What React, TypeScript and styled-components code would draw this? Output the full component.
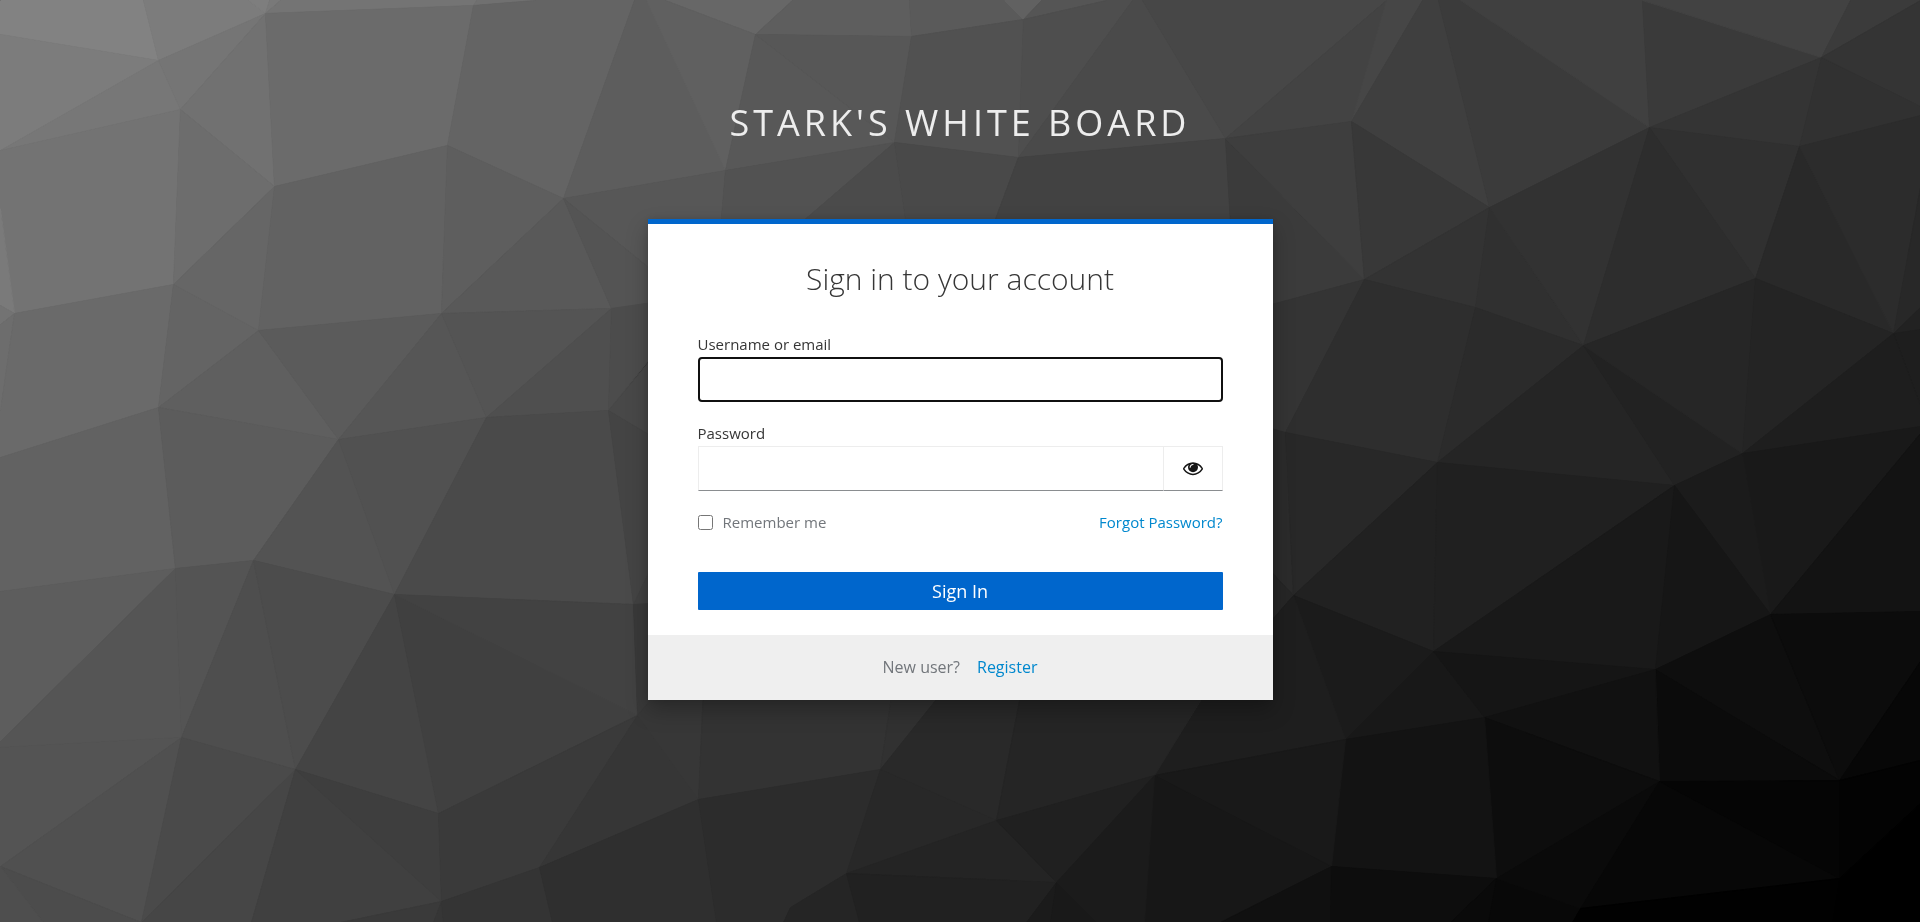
import React, { useState } from 'react';
import styled, { createGlobalStyle, css } from 'styled-components';

const GlobalStyle = createGlobalStyle`
  *, *::before, *::after { box-sizing: border-box; }
  body {
    margin: 0;
    background: #333;
    color: #363636;
    font-family: 'Open Sans', 'Noto Sans', sans-serif;
    font-size: 16px;
  }
`;

/* Low-poly backdrop: [grey level, outline] for every facet. */
const facets: Array<[string, string]> = [
  ['82', '0,0 143,0 158,60 0,34'],
  ['7c', '143,0 248,0 265,13 158,60'],
  ['7e', '248,0 269,0 265,13'],
  ['79', '269,0 280,0 265,13'],
  ['74', '280,0 476,0 473,5 265,13'],
  ['7c', '0,34 158,60 0,150'],
  ['77', '0,150 158,60 180,109'],
  ['75', '158,60 265,13 180,109'],
  ['71', '180,109 265,13 274,186'],
  ['6b', '265,13 473,5 447,145 274,186'],
  ['70', '476,0 535,0 473,5'],
  ['64', '473,5 535,0 634,0 563,198 447,145'],
  ['5d', '634,0 646,0 725,170 563,198'],
  ['73', '0,150 180,109 173,284 14,313 0,208'],
  ['7a', '0,208 14,313 0,305'],
  ['73', '0,305 14,313 0,324'],
  ['6d', '0,324 14,313 0,410'],
  ['6d', '180,109 274,186 173,284'],
  ['66', '274,186 258,330 173,284'],
  ['62', '274,186 447,145 441,313 258,330'],
  ['5e', '447,145 563,198 441,313'],
  ['59', '563,198 611,308 441,313'],
  ['6a', '14,313 173,284 158,407 0,457 0,410'],
  ['64', '173,284 258,330 158,407'],
  ['5f', '258,330 338,439 158,407'],
  ['5b', '258,330 441,313 338,439'],
  ['56', '441,313 486,417 338,439'],
  ['54', '441,313 611,308 486,417'],
  ['4f', '611,308 608,410 486,417'],
  ['62', '0,457 158,407 175,568 0,591'],
  ['5c', '158,407 338,439 253,560 175,568'],
  ['53', '338,439 394,594 253,560'],
  ['51', '338,439 486,417 394,594'],
  ['4a', '486,417 608,410 633,604 394,594'],
  ['5d', '0,591 175,568 0,741'],
  ['55', '175,568 181,737 0,747 0,741'],
  ['54', '175,568 253,560 181,737'],
  ['4e', '253,560 295,769 181,737'],
  ['4c', '253,560 394,594 295,769'],
  ['44', '394,594 438,813 295,769'],
  ['40', '394,594 637,715 438,813'],
  ['42', '394,594 633,604 637,715'],
  ['54', '0,747 181,737 0,866'],
  ['50', '0,866 181,737 141,922'],
  ['4c', '0,866 141,922 43,922'],
  ['4e', '0,866 43,922 0,922'],
  ['4a', '181,737 295,769 141,922'],
  ['46', '295,769 251,922 141,922'],
  ['40', '295,769 441,901 340,922 251,922'],
  ['3e', '295,769 438,813 441,901'],
  ['3a', '438,813 637,715 539,867 441,901'],
  ['36', '637,715 698,799 539,867'],
  ['3a', '441,901 340,922 433,922'],
  ['36', '441,901 433,922 443,922'],
  ['34', '441,901 539,867 552,922 443,922'],
  ['2f', '539,867 698,799 716,922 552,922'],
  ['57', '563,198 725,170 719,240 700,309'],
  ['54', '563,198 700,309 700,300 611,308'],
  ['4c', '611,308 700,295 608,410'],
  ['48', '608,410 700,300 700,465'],
  ['44', '608,410 700,465 633,604'],
  ['41', '633,604 700,465 700,620'],
  ['39', '637,715 633,604 700,600 700,640'],
  ['37', '637,715 700,640 703,690 698,799'],
  ['67', '665,0 792,0 755,34'],
  ['60', '646,0 665,0 755,34 725,170'],
  ['5e', '792,0 909,0 911,36 755,34'],
  ['58', '755,34 894,142 725,170'],
  ['57', '755,34 911,36 894,142'],
  ['5a', '909,0 1004,0 1023,19 911,36'],
  ['61', '1004,0 1041,0 1023,19'],
  ['55', '1041,0 1106,0 1023,19'],
  ['51', '911,36 1023,19 1018,157 894,142'],
  ['4e', '1023,19 1106,0 1132,0 1018,157'],
  ['4a', '1132,0 1142,0 1225,138 1018,157'],
  ['47', '1142,0 1386,0 1225,138'],
  ['52', '725,170 894,142 780,240 719,240'],
  ['4b', '894,142 908,240 780,240'],
  ['49', '894,142 1018,157 987,240 908,240'],
  ['42', '1018,157 1225,138 1231,240 987,240'],
  ['3b', '1225,138 1364,279 1260,307 1231,240'],
  ['43', '1386,0 1351,121 1225,138'],
  ['46', '1386,0 1422,0 1351,121'],
  ['3e', '1225,138 1351,121 1364,279'],
  ['3f', '1422,0 1438,0 1489,207 1351,121'],
  ['3b', '1438,0 1460,0 1649,127 1489,207'],
  ['40', '1460,0 1642,0 1649,127'],
  ['3a', '1642,0 1821,57 1649,127'],
  ['42', '1642,0 1850,0 1821,57'],
  ['3b', '1850,0 1920,0 1821,57'],
  ['34', '1821,57 1920,0 1920,106'],
  ['38', '1351,121 1489,207 1364,279'],
  ['33', '1489,207 1475,307 1364,279'],
  ['30', '1489,207 1583,345 1475,307'],
  ['32', '1489,207 1649,127 1583,345'],
  ['34', '1649,127 1821,57 1799,146'],
  ['31', '1821,57 1920,106 1920,115 1799,146'],
  ['30', '1649,127 1799,146 1755,278'],
  ['2d', '1649,127 1755,278 1583,345'],
  ['29', '1799,146 1893,333 1755,278'],
  ['2c', '1799,146 1920,115 1920,187 1893,333'],
  ['28', '1893,333 1920,187 1920,307'],
  ['22', '1893,333 1920,307 1920,329'],
  ['1e', '1893,333 1920,329 1920,405'],
  ['34', '1260,307 1364,279 1285,432 1260,440'],
  ['2e', '1364,279 1475,307 1437,462 1285,432'],
  ['2b', '1475,307 1583,345 1437,462'],
  ['25', '1583,345 1674,485 1437,462'],
  ['22', '1583,345 1742,453 1674,485'],
  ['26', '1583,345 1755,278 1742,453'],
  ['24', '1755,278 1893,333 1742,453'],
  ['1e', '1893,333 1920,405 1920,426 1742,453'],
  ['19', '1742,453 1920,426 1920,433 1770,614'],
  ['13', '1920,433 1920,611 1770,614'],
  ['1b', '1742,453 1770,614 1674,485'],
  ['2b', '1260,425 1285,432 1293,595 1260,560'],
  ['28', '1285,432 1437,462 1293,595'],
  ['26', '1260,560 1293,595 1201,700'],
  ['21', '1437,462 1433,651 1293,595'],
  ['20', '1437,462 1674,485 1433,651'],
  ['19', '1674,485 1655,669 1433,651'],
  ['16', '1674,485 1770,614 1655,669'],
  ['1b', '1293,595 1433,651 1345,739'],
  ['1e', '1293,595 1345,739 1154,775 1201,700'],
  ['18', '1433,651 1484,717 1345,739'],
  ['15', '1433,651 1655,669 1484,717'],
  ['0e', '1655,669 1770,614 1839,780'],
  ['0c', '1770,614 1920,611 1920,661 1839,780'],
  ['07', '1839,780 1920,661 1920,760'],
  ['0b', '1655,669 1839,780 1659,781'],
  ['11', '1484,717 1655,669 1659,781'],
  ['0d', '1484,717 1659,781 1496,878'],
  ['13', '1345,739 1484,717 1496,878 1331,866'],
  ['19', '1154,775 1345,739 1331,866'],
  ['17', '1154,775 1331,866 1220,922 1144,922'],
  ['10', '1331,866 1330,922 1220,922'],
  ['0d', '1331,866 1496,878 1450,922 1330,922'],
  ['0a', '1496,878 1488,922 1450,922'],
  ['08', '1496,878 1580,908 1572,922 1488,922'],
  ['0a', '1496,878 1659,781 1580,908'],
  ['07', '1659,781 1839,878 1580,908'],
  ['05', '1659,781 1839,780 1839,878'],
  ['03', '1839,780 1920,760 1920,803 1839,878'],
  ['00', '1839,878 1920,803 1920,922 1832,922'],
  ['01', '1580,908 1839,878 1832,922 1572,922'],
  ['33', '698,799 703,690 892,690 880,769'],
  ['31', '880,769 892,690 943,690'],
  ['29', '943,690 1021,690 996,820 880,769'],
  ['25', '1021,690 1206,690 1154,775 996,820'],
  ['2c', '698,799 880,769 846,873 790,907 783,922 716,922'],
  ['28', '880,769 996,820 846,873'],
  ['24', '846,873 996,820 1056,882'],
  ['20', '996,820 1154,775 1056,882'],
  ['1b', '1154,775 1144,922 1096,922 1056,882'],
  ['25', '846,873 859,922 783,922 790,907'],
  ['21', '846,873 1056,882 1026,922 859,922'],
  ['1b', '1056,882 1050,922 1026,922'],
  ['19', '1056,882 1096,922 1050,922'],
];

const Backdrop = styled.svg`
  position: fixed;
  inset: 0;
  z-index: -1;
  width: 100%;
  height: 100%;
`;

const Page = styled.div`
  display: flex;
  flex-direction: column;
  align-items: center;
  min-height: 100vh;
  padding-bottom: 40px;
`;

const Brand = styled.header`
  padding: 100px 16px 74px;
  color: #ededed;
  font-size: 36px;
  line-height: 45px;
  letter-spacing: 4px;
  text-align: center;
  text-transform: uppercase;
`;

const Card = styled.main`
  width: 100%;
  max-width: 625px;
  background: #fff;
  border-top: 5px solid #06c;
  box-shadow: 0 10px 20px rgba(3, 3, 3, 0.25), 0 0 8px rgba(3, 3, 3, 0.12);
`;

const Title = styled.h1`
  margin: 0;
  padding: 35px 50px 0;
  font-size: 30px;
  font-weight: 300;
  line-height: 40px;
  text-align: center;
`;

const Form = styled.form`
  display: flex;
  flex-direction: column;
  padding: 34px 50px 25px;
`;

const Field = styled.div`
  display: flex;
  flex-direction: column;
  gap: 2px;
  margin-bottom: 20px;
`;

const Label = styled.label`
  font-size: 15px;
  line-height: 22px;
`;

const TextInput = styled.input<{ $outlined?: boolean }>`
  width: 100%;
  height: 45px;
  padding: 0 10px;
  border: 1px solid #ededed;
  border-bottom-color: #8a8d90;
  border-radius: 0;
  background: #fff;
  color: #151515;
  font: inherit;
  outline: none;

  ${({ $outlined }) =>
    $outlined &&
    css`
      border: 2px solid #101010;
      border-radius: 4px;
    `}
`;

const PasswordGroup = styled.div`
  display: flex;
`;

const RevealButton = styled.button`
  display: flex;
  flex: 0 0 59px;
  align-items: center;
  justify-content: center;
  padding: 0 0 2px;
  border: 1px solid #ededed;
  border-bottom-color: #8a8d90;
  border-left: 0;
  background: #fff;
  color: #151515;
  cursor: pointer;
`;

const Options = styled.div`
  display: flex;
  align-items: center;
  justify-content: space-between;
  margin-bottom: 39px;
  font-size: 15px;
  line-height: 22px;
`;

const Remember = styled.label`
  display: flex;
  align-items: center;
  gap: 10px;
  color: #72767b;
`;

const Checkbox = styled.input`
  width: 15px;
  height: 15px;
  margin: 0;
`;

const Link = styled.a`
  color: #0088ce;
  text-decoration: none;
`;

const SubmitButton = styled.button`
  height: 38px;
  padding: 0;
  border: 0;
  border-radius: 1px;
  background: #06c;
  color: #fff;
  font: inherit;
  font-size: 18px;
  cursor: pointer;
`;

const CardFooter = styled.footer`
  display: flex;
  justify-content: center;
  gap: 17px;
  padding: 20px;
  background: #efefef;
  color: #72767b;
  line-height: 25px;
`;

function EyeIcon() {
  return (
    <svg width="20" height="20" viewBox="0 0 1792 1792" fill="currentColor" aria-hidden="true">
      <path d="M1664 960q-152-236-381-353 61 104 61 225 0 185-131.5 316.5t-316.5 131.5-316.5-131.5-131.5-316.5q0-121 61-225-229 117-381 353 133 205 333.5 326.5t434.5 121.5 434.5-121.5 333.5-326.5zm-720-384q0-20-14-34t-34-14q-125 0-214.5 89.5t-89.5 214.5q0 20 14 34t34 14 34-14 14-34q0-86 61-147t147-61q20 0 34-14t14-34zm848 384q0 34-20 69-140 230-376.5 368.5t-499.5 138.5-499.5-139-376.5-368q-20-35-20-69t20-69q140-229 376.5-368t499.5-139 499.5 139 376.5 368q20 35 20 69z" />
    </svg>
  );
}

/* Each facet is stroked in its own grey so that no seams show between neighbours. */
function LowPolyBackdrop() {
  return (
    <Backdrop viewBox="0 0 1920 922" preserveAspectRatio="xMidYMid slice" aria-hidden="true">
      <g transform="translate(0.5 0.5)">
        {facets.map(([grey, points]) => {
          const fill = `#${grey}${grey}${grey}`;
          return <polygon key={points} points={points} fill={fill} stroke={fill} strokeWidth="1" />;
        })}
      </g>
    </Backdrop>
  );
}

export default function App() {
  const [revealed, setRevealed] = useState(false);

  return (
    <>
      <GlobalStyle />
      <LowPolyBackdrop />
      <Page>
        <Brand>Stark's White Board</Brand>
        <Card>
          <Title>Sign in to your account</Title>
          <Form onSubmit={(event) => event.preventDefault()}>
            <Field>
              <Label htmlFor="username">Username or email</Label>
              <TextInput id="username" name="username" type="text" autoComplete="off" $outlined />
            </Field>
            <Field>
              <Label htmlFor="password">Password</Label>
              <PasswordGroup>
                <TextInput
                  id="password"
                  name="password"
                  type={revealed ? 'text' : 'password'}
                  autoComplete="off"
                />
                <RevealButton
                  type="button"
                  aria-label="Show password"
                  aria-pressed={revealed}
                  onClick={() => setRevealed(!revealed)}
                >
                  <EyeIcon />
                </RevealButton>
              </PasswordGroup>
            </Field>
            <Options>
              <Remember>
                <Checkbox type="checkbox" name="rememberMe" />
                Remember me
              </Remember>
              <Link href="#forgot">Forgot Password?</Link>
            </Options>
            <SubmitButton type="submit">Sign In</SubmitButton>
          </Form>
          <CardFooter>
            <span>New user?</span>
            <Link href="#register">Register</Link>
          </CardFooter>
        </Card>
      </Page>
    </>
  );
}
